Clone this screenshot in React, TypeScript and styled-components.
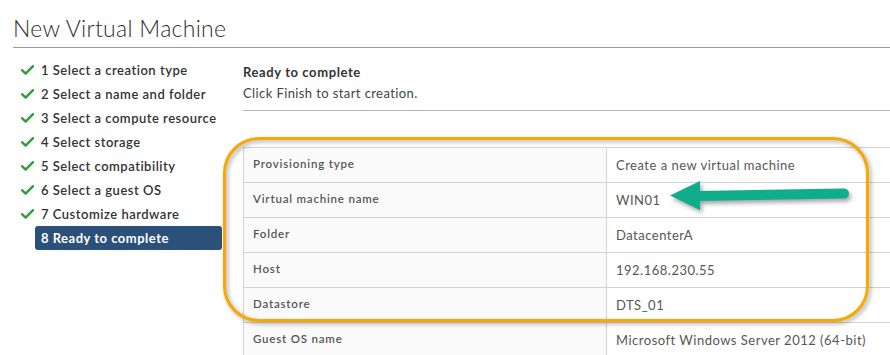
import React from "react";
import styled, { createGlobalStyle } from "styled-components";

const GlobalStyle = createGlobalStyle`
  html, body {
    margin: 0;
    padding: 0;
    background: #fff;
    overflow: hidden;
  }
  body {
    font-family: Lato, "Noto Sans", sans-serif;
    color: #333;
  }
`;

const Page = styled.div`
  width: 890px;
  height: 355px;
  padding-left: 13px;
  box-sizing: border-box;
  overflow: hidden;
`;

const Title = styled.h1`
  margin: 0;
  padding: 0;
  height: 47px;
  border-bottom: 1px solid #9c9c9c;
  font-size: 23px;
  font-weight: 300;
  letter-spacing: 0.3px;
  color: #2f2f2f;
  line-height: 57px;
`;

const Body = styled.div`
  display: flex;
  gap: 21px;
  padding-top: 10px;
`;

const Steps = styled.ol`
  list-style: none;
  margin: 0;
  padding: 0;
  width: 209px;
  flex: none;
`;

const Step = styled.li`
  display: flex;
  align-items: center;
  height: 24px;
`;

const CheckSlot = styled.span`
  width: 22px;
  flex: none;
  display: flex;
  padding-left: 8px;
  box-sizing: border-box;
`;

const StepLabel = styled.span<{ $active?: boolean }>`
  flex: 1;
  height: 24px;
  line-height: 24px;
  padding: 0 6px;
  border-radius: 3px;
  font-size: 13px;
  font-weight: ${(p) => (p.$active ? 700 : 600)};
  letter-spacing: 0.5px;
  color: ${(p) => (p.$active ? "#fff" : "#333")};
  background: ${(p) => (p.$active ? "#2b5079" : "transparent")};
  white-space: nowrap;
`;

const Content = styled.div`
  flex: 1;
  min-width: 0;
`;

const Header = styled.div`
  padding-top: 6px;
  height: 46px;
  border-bottom: 1px solid #b5b5b5;
  h2 {
    margin: 0;
    font-size: 13px;
    font-weight: 700;
    letter-spacing: 0.6px;
    color: #333;
    line-height: 16px;
  }
  p {
    margin: 5px 0 0;
    font-size: 13px;
    letter-spacing: 0.4px;
    color: #444;
    line-height: 16px;
  }
`;

const TableWrap = styled.div`
  position: relative;
  margin-top: 36px;
`;

const Table = styled.table`
  width: 100%;
  border-collapse: collapse;
  table-layout: fixed;
  td {
    height: 35px;
    box-sizing: border-box;
    border: 1px solid #d2d2d2;
    padding: 0 9px;
    color: #565656;
  }
  td:last-child {
    border-right: none;
  }
`;

const Label = styled.td`
  width: 363px;
  background: #fafafa;
  font-size: 11.5px;
  font-weight: 600;
  letter-spacing: 0.8px;
  vertical-align: top;
  padding-top: 9px !important;
`;

const Value = styled.td`
  background: #fff;
  font-size: 13px;
  letter-spacing: 0.5px;
`;

const Highlight = styled.div`
  position: absolute;
  left: -20px;
  top: -10px;
  width: 646px;
  height: 185px;
  box-sizing: border-box;
  border: 3px solid #f7a900;
  border-radius: 36px;
  filter: drop-shadow(2px 2px 2px rgba(0, 0, 0, 0.35));
  pointer-events: none;
`;

const Arrow = styled.svg`
  position: absolute;
  left: 417px;
  top: 31px;
  overflow: visible;
  filter: drop-shadow(2px 3px 2px rgba(0, 0, 0, 0.35));
`;

const CheckIcon = () => (
  <svg width="13" height="10" viewBox="0 0 13 10">
    <path
      d="M1 5.2 L4.6 8.6 L12 1.2"
      fill="none"
      stroke="#2f9e3a"
      strokeWidth="2.4"
      strokeLinecap="round"
      strokeLinejoin="round"
    />
  </svg>
);

const steps = [
  "1 Select a creation type",
  "2 Select a name and folder",
  "3 Select a compute resource",
  "4 Select storage",
  "5 Select compatibility",
  "6 Select a guest OS",
  "7 Customize hardware",
  "8 Ready to complete",
];

const rows: [string, string][] = [
  ["Provisioning type", "Create a new virtual machine"],
  ["Virtual machine name", "WIN01"],
  ["Folder", "DatacenterA"],
  ["Host", "192.168.230.55"],
  ["Datastore", "DTS_01"],
  ["Guest OS name", "Microsoft Windows Server 2012 (64-bit)"],
];

const App: React.FC = () => {
  return (
    <Page>
      <GlobalStyle />
      <Title>New Virtual Machine</Title>
      <Body>
        <Steps>
          {steps.map((s, i) => {
            const active = i === steps.length - 1;
            return (
              <Step key={s}>
                <CheckSlot>{!active && <CheckIcon />}</CheckSlot>
                <StepLabel $active={active}>{s}</StepLabel>
              </Step>
            );
          })}
        </Steps>
        <Content>
          <Header>
            <h2>Ready to complete</h2>
            <p>Click Finish to start creation.</p>
          </Header>
          <TableWrap>
            <Table>
              <tbody>
                {rows.map(([k, v]) => (
                  <tr key={k}>
                    <Label>{k}</Label>
                    <Value>{v}</Value>
                  </tr>
                ))}
              </tbody>
            </Table>
            <Highlight />
            <Arrow width="200" height="40" viewBox="660 178 200 40">
              <line
                x1="698"
                y1="196"
                x2="844"
                y2="193.5"
                stroke="#10ad8d"
                strokeWidth="10"
                strokeLinecap="round"
              />
              <polygon points="670,195.5 700,181 700,210" fill="#10ad8d" />
            </Arrow>
          </TableWrap>
        </Content>
      </Body>
    </Page>
  );
};

export default App;
